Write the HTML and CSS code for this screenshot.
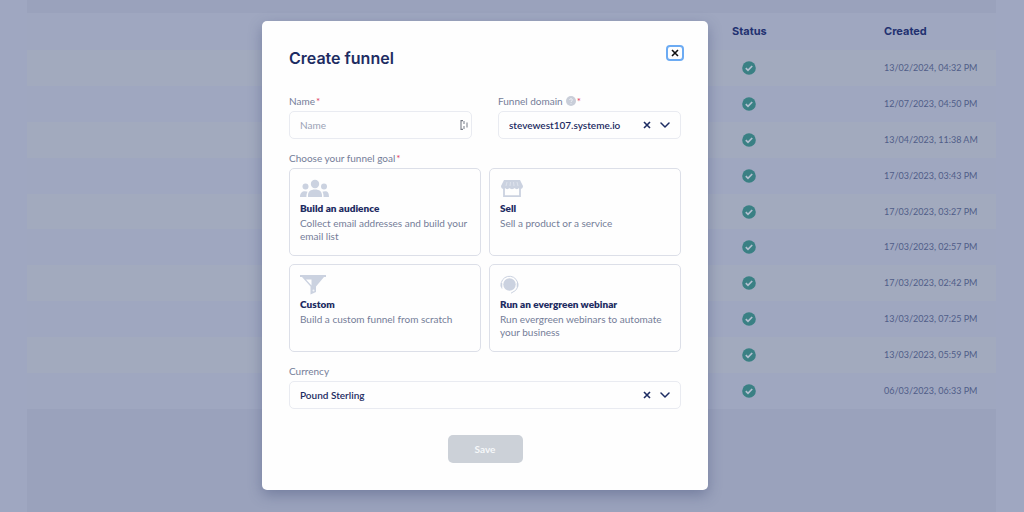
FILE: index.html
```html
<!DOCTYPE html>
<html lang="en">
<head>
    <meta charset="UTF-8">
    <meta name="viewport" content="width=device-width, initial-scale=1.0">
    <title>Create funnel</title>
    <link rel="stylesheet" href="styles.css">
</head>
<body>
    <svg class="sprite" aria-hidden="true">
        <symbol id="icon-check" viewBox="0 0 14 14">
            <circle cx="7" cy="7" r="6.8" fill="#3a8084"/>
            <path d="M3.8 7.2 6 9.4 10.2 5" fill="none" stroke="#b3bfd0" stroke-width="1.7"/>
        </symbol>
        <symbol id="icon-cross" viewBox="0 0 8 8">
            <path d="M1 1 7 7M7 1 1 7" fill="none" stroke="currentColor" stroke-width="1.6"/>
        </symbol>
        <symbol id="icon-chevron" viewBox="0 0 10 8">
            <path d="M1 2 5 6 9 2" fill="none" stroke="currentColor" stroke-width="1.5" stroke-linecap="round" stroke-linejoin="round"/>
        </symbol>
    </svg>

    <main class="page">
        <table class="funnels">
            <thead>
                <tr><th></th><th class="status">Status</th><th class="created">Created</th></tr>
            </thead>
            <tbody id="funnel-rows"></tbody>
        </table>
    </main>

    <div class="overlay">
        <form class="modal" role="dialog" aria-labelledby="modal-title">
            <div class="modal-header">
                <h2 id="modal-title">Create funnel</h2>
                <button type="button" class="close" aria-label="Close"><svg class="cross"><use href="#icon-cross"/></svg></button>
            </div>

            <div class="row">
                <div class="field">
                    <label for="name">Name<span class="required">*</span></label>
                    <div class="control">
                        <input type="text" id="name" placeholder="Name">
                        <svg class="autofill" viewBox="0 0 8 10" aria-hidden="true">
                            <path d="M1 0V10M1 .6H3M1 9.4H3" fill="none" stroke="#777c86" stroke-width="1.1"/>
                            <path d="M4 1V4M4 6V9M7 2.5V7.5" fill="none" stroke="#8c919b" stroke-width="1.2"/>
                        </svg>
                    </div>
                </div>
                <div class="field">
                    <label for="domain">Funnel domain
                        <svg class="help" viewBox="0 0 10 10" aria-hidden="true">
                            <circle cx="5" cy="5" r="5" fill="#c9ced9"/>
                            <path d="M3.6 4C3.6 2.2 6.4 2.2 6.4 4C6.4 5 5 4.9 5 6M5 6.9V7.8" fill="none" stroke="#eef0f5" stroke-width=".9"/>
                        </svg><span class="required">*</span></label>
                    <div class="control">
                        <select id="domain"><option>stevewest107.systeme.io</option></select>
                        <button type="button" class="clear" aria-label="Clear domain"><svg class="cross"><use href="#icon-cross"/></svg></button>
                        <svg class="chevron"><use href="#icon-chevron"/></svg>
                    </div>
                </div>
            </div>

            <div class="field" role="group" aria-labelledby="goal-label">
                <div class="label" id="goal-label">Choose your funnel goal<span class="required">*</span></div>
                <div class="goals">
                    <button type="button" class="goal">
                        <svg class="goal-icon" viewBox="0 0 30 20">
                            <circle cx="15" cy="5" r="4.2"/>
                            <circle cx="5.5" cy="7.5" r="3"/>
                            <circle cx="24" cy="7.5" r="3"/>
                            <path d="M8 18V16.500C8 12.500 10.500 10.500 15 10.500S22 12.500 22 16.500V18ZM0 18C0 14 2 12.200 5 12.200 6 12.200 7 12.400 7.600 12.800 6.700 14.200 6.400 16 6.400 18ZM23.600 18C23.600 16 23.300 14.200 22.400 12.800 23 12.400 24 12.200 25 12.200 28 12.200 29 14 29 18Z"/>
                        </svg>
                        <span class="goal-title">Build an audience</span>
                        <span class="goal-text">Collect email addresses and build your email list</span>
                    </button>
                    <button type="button" class="goal">
                        <svg class="goal-icon" viewBox="0 0 30 20">
                            <path d="M4 1H20L23 7C23 10 20 10.500 19 9 18 10.500 15.500 10.500 14.500 9 13.500 10.500 10.500 10.500 9.500 9 8.500 10.500 6 10.500 5 9 4 10.500 1 10 1 7Z"/>
                            <path d="M4 9V17.200H20V9" fill="none" stroke="#cbd2e0" stroke-width="1.8"/>
                            <path d="M7 3 6 7M10.500 3 10 7M13.500 3 14 7M17 3 18 7" fill="none" stroke="#e2e6ef" stroke-width=".8"/>
                        </svg>
                        <span class="goal-title">Sell</span>
                        <span class="goal-text">Sell a product or a service</span>
                    </button>
                    <button type="button" class="goal">
                        <svg class="goal-icon" viewBox="0 0 30 20">
                            <path d="M0 0H26V2H0Z"/>
                            <path d="M2 2H24L16 11.500V17L10.500 19.500V11.500ZM6 4.500 11.500 10.500V4.500Z" fill-rule="evenodd"/>
                            <circle cx="13.5" cy="15.5" r="1" fill="#f2f4f8"/>
                        </svg>
                        <span class="goal-title">Custom</span>
                        <span class="goal-text">Build a custom funnel from scratch</span>
                    </button>
                    <button type="button" class="goal">
                        <svg class="goal-icon" viewBox="0 0 30 20">
                            <circle cx="9.5" cy="9.5" r="6.2"/>
                            <path d="M2 13.500A8.400 8.400 0 1 1 15.500 15.500L11 18.200" fill="none" stroke="#cbd2e0" stroke-width="1"/>
                            <path d="M1.500 8V12M17.500 8V12" fill="none" stroke="#cbd2e0" stroke-width="1.5"/>
                        </svg>
                        <span class="goal-title">Run an evergreen webinar</span>
                        <span class="goal-text">Run evergreen webinars to automate your business</span>
                    </button>
                </div>
            </div>

            <div class="field">
                <label for="currency">Currency</label>
                <div class="control">
                    <select id="currency"><option>Pound Sterling</option></select>
                    <button type="button" class="clear" aria-label="Clear currency"><svg class="cross"><use href="#icon-cross"/></svg></button>
                    <svg class="chevron"><use href="#icon-chevron"/></svg>
                </div>
            </div>

            <button type="submit" class="save" disabled>Save</button>
        </form>
    </div>

    <script>
        const dates = [
            '13/02/2024, 04:32 PM',
            '12/07/2023, 04:50 PM',
            '13/04/2023, 11:38 AM',
            '17/03/2023, 03:43 PM',
            '17/03/2023, 03:27 PM',
            '17/03/2023, 02:57 PM',
            '17/03/2023, 02:42 PM',
            '13/03/2023, 07:25 PM',
            '13/03/2023, 05:59 PM',
            '06/03/2023, 06:33 PM'
        ];

        document.getElementById('funnel-rows').innerHTML = dates.map(date => `
            <tr>
                <td></td>
                <td class="status"><svg class="check"><use href="#icon-check"/></svg></td>
                <td class="created">${date}</td>
            </tr>
        `).join('');
    </script>
</body>
</html>
```
FILE: styles.css
```css
* {
    box-sizing: border-box;
}
body {
    margin: 0;
    min-height: 100vh;
    background: #9fa7c1;
    font-family: Lato, "Liberation Sans", sans-serif;
    font-size: 10px;
    line-height: 14px;
    color: #1d2c62;
}
button, input, select {
    font: inherit;
    color: inherit;
    margin: 0;
    padding: 0;
    border: 0;
    background: none;
}
svg {
    display: block;
    flex: none;
}
.sprite {
    display: none;
}

/* funnel list behind the dialog */
.page {
    min-height: 100vh;
    margin: 0 28px 0 27px;
    padding-top: 13px;
    background: #9aa2bc;
}
.funnels {
    width: 100%;
    height: 396px;
    border-collapse: collapse;
    table-layout: fixed;
    background: #9fa7c0;
}
.funnels th {
    height: 37px;
    padding: 0 0 2px;
    font-family: Inter, sans-serif;
    font-size: 11px;
    font-weight: 700;
    text-align: left;
    color: #223170;
}
.funnels td {
    height: 35px;
    padding: 0;
    font-size: 9px;
    color: #505d88;
}
.funnels tbody tr:nth-child(odd) {
    background: #a2aabe;
}
.funnels th.status {
    width: 152px;
}
.funnels th.created {
    width: 112px;
}
.check {
    width: 14px;
    height: 14px;
    margin-left: 10px;
}

.overlay {
    position: absolute;
    inset: 0;
    display: flex;
    justify-content: center;
    align-items: flex-start;
    padding: 21px 54px 21px 0;
}
.modal {
    width: 100%;
    max-width: 446px;
    padding: 24px 27px 27px;
    background: #fefefe;
    border-radius: 5px;
    box-shadow: 0 5px 14px rgba(60, 72, 115, 0.4);
}
.modal-header {
    display: flex;
    justify-content: space-between;
    align-items: flex-start;
    margin-bottom: 23px;
}
.modal-header h2 {
    margin: 0;
    font-family: Inter, sans-serif;
    font-size: 16px;
    font-weight: 600;
    line-height: 26px;
}
.close {
    display: flex;
    align-items: center;
    justify-content: center;
    width: 18px;
    height: 16px;
    margin-right: -3px;
    border: 2px solid #6cabf3;
    border-radius: 4px;
    color: #111;
}
.cross {
    width: 8px;
    height: 8px;
}

.row {
    display: grid;
    grid-template-columns: 1fr 1fr;
    gap: 26px;
}
.field {
    margin-bottom: 12px;
}
.field label, .label {
    display: flex;
    align-items: center;
    margin-bottom: 3px;
    color: #747d98;
}
.required {
    margin-left: 1px;
    color: #e0405e;
}
.help {
    width: 10px;
    height: 10px;
    margin-left: 3px;
}
.control {
    display: flex;
    align-items: center;
    height: 28px;
    padding: 0 10px;
    border: 1px solid #e9ebf1;
    border-radius: 5px;
}
.control input, .control select {
    flex: 1;
    min-width: 0;
    height: 26px;
    appearance: none;
    outline: none;
}
.control select {
    font-weight: 600;
}
.control input::placeholder {
    color: #9ba2b5;
    opacity: 1;
}
.autofill {
    width: 8px;
    height: 10px;
    margin-right: -7px;
}
.chevron {
    width: 10px;
    height: 8px;
    margin-left: 9px;
}

.goals {
    display: grid;
    grid-template-columns: 1fr 1fr;
    gap: 8px;
}
.goal {
    display: flex;
    flex-direction: column;
    align-items: flex-start;
    gap: 2px;
    min-height: 88px;
    padding: 10px;
    border: 1px solid #dcdfe8;
    border-radius: 5px;
    text-align: left;
}
.goal-icon {
    width: 30px;
    height: 20px;
    fill: #cbd2e0;
}
.goal-title {
    font-weight: 800;
}
.goal-text {
    line-height: 13px;
    color: #747d98;
}

.save {
    display: block;
    width: 75px;
    height: 28px;
    margin: 26px auto 0;
    border-radius: 5px;
    background: #ccd1d8;
    color: #f6f8fa;
    font-weight: 700;
}
```
